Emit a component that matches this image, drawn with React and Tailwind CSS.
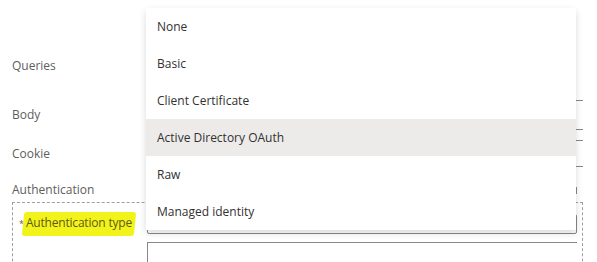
import React from "react";

const options = [
  "None",
  "Basic",
  "Client Certificate",
  "Active Directory OAuth",
  "Raw",
  "Managed identity",
];

export default function App() {
  return (
    <div
      className="relative w-[597px] h-[262px] overflow-hidden bg-white text-[12px]"
      style={{ fontFamily: '"Open Sans", "Noto Sans", sans-serif' }}
    >
      {/* form behind the menu */}
      <div className="flex flex-col pl-[12px] pr-[14px] text-[#605e5c]">
        <div className="flex items-center h-[30px] mt-[51px]">
          <span className="w-[135px]">Queries</span>
        </div>
        <div className="flex items-center h-[30px] mt-[19px]">
          <span className="w-[135px]">Body</span>
          <div className="flex-1 h-[30px] border border-r-0 border-[#8a8886]" />
        </div>
        <div className="flex items-center h-[27px] mt-[10px]">
          <span className="w-[135px]">Cookie</span>
          <div className="flex-1 h-[27px] border border-r-0 border-[#8a8886]" />
        </div>
        <div className="flex items-center h-[20px] mt-[13px]">
          <span className="flex-1">Authentication</span>
          <div className="w-[3px] h-[7px] bg-[#8a8886] mr-[6px]" />
        </div>
        <div className="mt-[2px] h-[80px] border border-dashed border-[#a19f9d] pl-[6px] pt-[11px]">
          <div className="flex">
            <div className="w-[128px] flex items-start">
              <span className="text-[9px] mt-[3px] mr-[2px]">*</span>
              <span className="relative">
                <span className="absolute -left-[3px] -right-[3px] -top-[2px] -bottom-[4px] bg-[#f3f31c] rounded-[3px] -skew-x-6" />
                <span className="relative text-[#5d5c14] tracking-[-0.2px]">Authentication type</span>
              </span>
            </div>
            <div className="flex-1 flex flex-col mr-[5px]">
              <div className="h-[20px] border border-[#8a8886] rounded-[2px]" />
              <div className="h-[40px] mt-[8px] border-t border-l border-[#8a8886]" />
            </div>
          </div>
        </div>
      </div>

      {/* open menu */}
      <div className="absolute left-[146px] top-[8px] w-[430px] bg-white shadow-[0_3px_7px_rgba(0,0,0,0.15)]">
        {options.map((o) => (
          <div
            key={o}
            className={`h-[37px] flex items-center px-[11px] text-[#323130] ${
              o === "Active Directory OAuth" ? "bg-[#edebe9]" : ""
            }`}
          >
            {o}
          </div>
        ))}
      </div>
    </div>
  );
}
